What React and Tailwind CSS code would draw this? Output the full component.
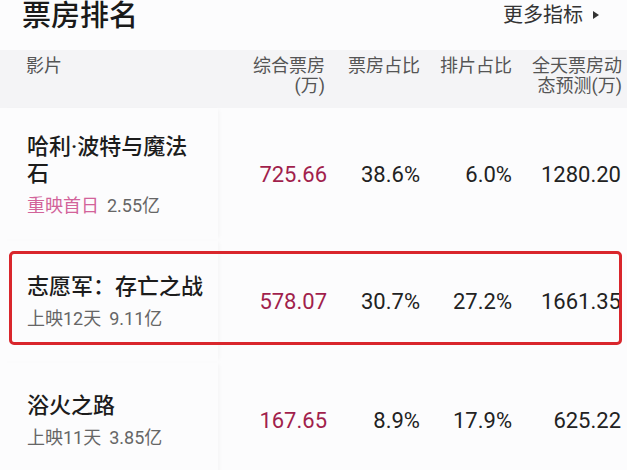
import React from 'react';

const films = [
  {
    name: ['哈利·波特与魔法', '石'],
    tag: '重映首日',
    tagPink: true,
    total: '2.55亿',
    box: '725.66',
    boxShare: '38.6%',
    showShare: '6.0%',
    forecast: '1280.20',
    h: 'h-[132px]',
  },
  {
    name: ['志愿军：存亡之战'],
    tag: '上映12天',
    total: '9.11亿',
    box: '578.07',
    boxShare: '30.7%',
    showShare: '27.2%',
    forecast: '1661.35',
    h: 'h-[122px]',
    marked: true,
  },
  {
    name: ['浴火之路'],
    tag: '上映11天',
    total: '3.85亿',
    box: '167.65',
    boxShare: '8.9%',
    showShare: '17.9%',
    forecast: '625.22',
    h: 'h-[116px]',
  },
];

function App() {
  return (
    <div className="w-[627px] h-[470px] overflow-hidden bg-[#fcfcfd] font-['Roboto','Noto_Sans_CJK_SC',sans-serif] text-[#222]">
      {/* 标题 */}
      <div className="h-[50px] flex items-start justify-between pl-[22px] pr-[28px] pt-[1px]">
        <h1 className="text-[29px] leading-[30px] font-medium text-[#1a1a1a]">票房排名</h1>
        <div className="flex items-center gap-[10px] mt-[4px] text-[20px] leading-[20px] text-[#333]">
          <span>更多指标</span>
          <svg width="6" height="8" viewBox="0 0 6 8">
            <path d="M0 0 L6 4 L0 8 Z" fill="#333" />
          </svg>
        </div>
      </div>

      {/* 表头 */}
      <div className="h-[58px] flex bg-[#f4f4f6] pt-[6px] text-[18px] leading-[20px] text-[#555]">
        <div className="w-[218px] shrink-0 pl-[26px]">影片</div>
        <div className="w-[107px] text-right">综合票房<br />(万)</div>
        <div className="w-[95px] text-right">票房占比</div>
        <div className="w-[92px] text-right">排片占比</div>
        <div className="w-[110px] text-right">全天票房动<br />态预测(万)</div>
      </div>

      {/* 列表 */}
      {films.map((f, i) => (
        <div key={i} className={`relative flex items-center ${f.h}`}>
          <div className="w-[218px] h-full shrink-0 pl-[27px] flex flex-col justify-center shadow-[3px_0_4px_-2px_rgba(0,0,0,0.04)]">
            <div className="text-[22px] leading-[27px] font-medium text-[#1c1c1c]">
              {f.name.map((n, j) => (
                <div key={j}>{n}</div>
              ))}
            </div>
            <div className="mt-[9px] text-[18px] leading-[20px] text-[#666]">
              <span className={f.tagPink ? 'text-[#d2639a]' : ''}>{f.tag}</span>
              <span className="ml-[8px]">{f.total}</span>
            </div>
          </div>
          <div className="w-[109px] text-right text-[22px] text-[#a11f4c]">{f.box}</div>
          <div className="w-[93px] text-right text-[22px]">{f.boxShare}</div>
          <div className="w-[92px] text-right text-[22px]">{f.showShare}</div>
          <div className="w-[109px] text-right text-[22px]">{f.forecast}</div>
          {f.marked && (
            <div className="absolute left-[9px] top-[11px] w-[613px] h-[94px] border-[3px] border-[#d9262c] rounded-[5px]" />
          )}
        </div>
      ))}
    </div>
  );
}

export default App;
